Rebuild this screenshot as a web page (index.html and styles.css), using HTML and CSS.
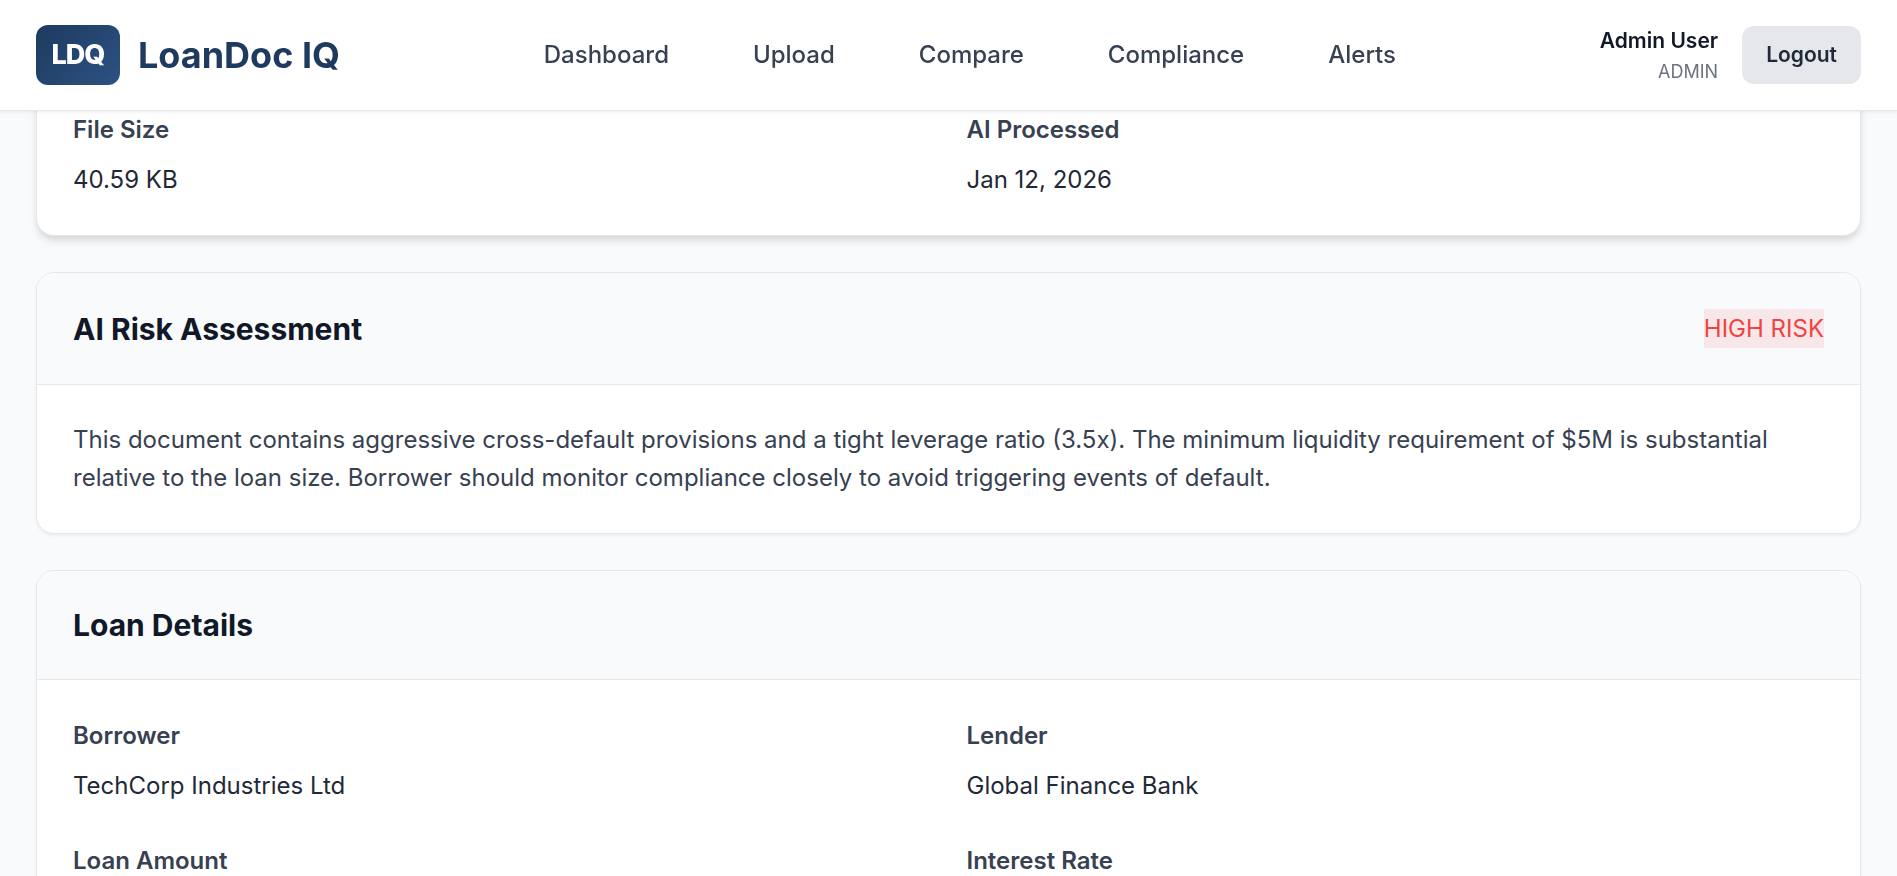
FILE: index.html
```
<!DOCTYPE html>
<html lang="en">

<head>
    <title>LoanDoc IQ</title>
    <meta charset="UTF-8">
    <meta name="viewport" content="width=device-width, initial-scale=1.0">
    <link rel="stylesheet" href="styles.css">
</head>

<body>
    <header class="header">
        <div class="brand">
            <div class="logo">LDQ</div>
            <span class="brand-name">LoanDoc IQ</span>
        </div>
        <nav class="nav">
            <a href="#">Dashboard</a>
            <a href="#">Upload</a>
            <a href="#">Compare</a>
            <a href="#">Compliance</a>
            <a href="#">Alerts</a>
        </nav>
        <div class="user">
            <div class="user-info">
                <div class="user-name">Admin User</div>
                <div class="user-role">ADMIN</div>
            </div>
            <button type="button" class="logout">Logout</button>
        </div>
    </header>

    <main class="main">
        <section class="card card-raised">
            <dl class="card-body fields">
                <div class="field">
                    <dt>File Size</dt>
                    <dd>40.59 KB</dd>
                </div>
                <div class="field">
                    <dt>AI Processed</dt>
                    <dd>Jan 12, 2026</dd>
                </div>
            </dl>
        </section>

        <section class="card">
            <div class="card-header">
                <h2>AI Risk Assessment</h2>
                <span class="risk">HIGH RISK</span>
            </div>
            <div class="card-body">
                <p>This document contains aggressive cross-default provisions and a tight leverage ratio (3.5x). The minimum liquidity requirement of $5M is substantial relative to the loan size. Borrower should monitor compliance closely to avoid triggering events of default.</p>
            </div>
        </section>

        <section class="card">
            <div class="card-header">
                <h2>Loan Details</h2>
            </div>
            <dl class="card-body fields">
                <div class="field">
                    <dt>Borrower</dt>
                    <dd>TechCorp Industries Ltd</dd>
                </div>
                <div class="field">
                    <dt>Lender</dt>
                    <dd>Global Finance Bank</dd>
                </div>
                <div class="field">
                    <dt>Loan Amount</dt>
                </div>
                <div class="field">
                    <dt>Interest Rate</dt>
                </div>
            </dl>
        </section>
    </main>
</body>

</html>
```

FILE: styles.css
```
* {
    margin: 0;
    padding: 0;
    box-sizing: border-box;
}

body {
    height: 100vh;
    overflow: hidden;
    font-family: Inter, "Liberation Sans", sans-serif;
    font-size: 24px;
    line-height: 38px;
    color: #1f2937;
    background-color: #f9fafc;
}

.header {
    position: fixed;
    top: 0;
    left: 0;
    right: 0;
    z-index: 10;
    display: flex;
    align-items: center;
    justify-content: space-between;
    padding: 24px 36px;
    background-color: #fff;
    border-bottom: 1px solid #e5e7eb;
    box-shadow: 0 2px 3px rgba(0, 0, 0, 0.05);
}

.brand {
    display: flex;
    align-items: center;
    gap: 18px;
}

.logo {
    display: flex;
    align-items: center;
    justify-content: center;
    width: 84px;
    height: 60px;
    border-radius: 12px;
    background: linear-gradient(135deg, #1e3a5f, #2c5282);
    color: #fff;
    font-size: 27px;
    font-weight: 800;
    letter-spacing: -1px;
}

.brand-name {
    color: #1e3a5f;
    font-size: 36px;
    font-weight: 700;
    line-height: 36px;
}

.nav {
    display: flex;
    gap: 48px;
}

.nav a {
    padding: 0 18px;
    color: #374151;
    font-weight: 500;
    text-decoration: none;
}

.user {
    display: flex;
    align-items: center;
    gap: 24px;
}

.user-info {
    text-align: right;
}

.user-name {
    color: #111827;
    font-size: 21px;
    font-weight: 600;
    line-height: 33px;
}

.user-role {
    color: #6b7280;
    font-size: 18px;
    line-height: 29px;
}

.logout {
    padding: 16px 24px;
    border: none;
    border-radius: 12px;
    background-color: #e5e7eb;
    color: #1f2937;
    font-family: inherit;
    font-size: 21px;
    font-weight: 600;
    line-height: 26px;
    cursor: pointer;
}

.main {
    padding: 73px 36px 36px;
}

.card {
    margin-bottom: 36px;
    background-color: #fff;
    border: 1px solid #e5e7eb;
    border-radius: 18px;
    box-shadow: 0 2px 3px rgba(0, 0, 0, 0.05);
    overflow: hidden;
}

.card-raised {
    box-shadow: 0 6px 9px -1px rgba(0, 0, 0, 0.1), 0 3px 6px -1px rgba(0, 0, 0, 0.06);
}

.card-header {
    display: flex;
    align-items: center;
    justify-content: space-between;
    padding: 36px;
    background-color: #f9fafc;
    border-bottom: 1px solid #e5e7eb;
}

.card-header h2 {
    color: #111827;
    font-size: 30px;
    font-weight: 700;
    line-height: 36px;
}

.risk {
    background-color: rgba(239, 68, 68, 0.1);
    color: #ef4444;
    line-height: 39px;
}

.card-body {
    padding: 36px;
}

.card-body p {
    color: #374151;
}

.fields {
    display: grid;
    grid-template-columns: 1fr 1fr;
    gap: 36px;
}

.field dt {
    margin-bottom: 12px;
    color: #374151;
    font-weight: 600;
    line-height: 39px;
}
```
